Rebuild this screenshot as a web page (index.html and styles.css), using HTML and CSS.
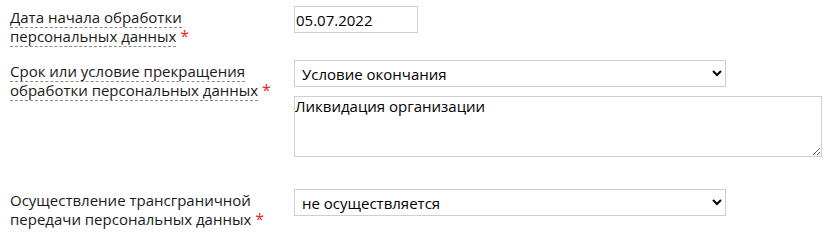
FILE: index.html
```html
<!DOCTYPE html>
<html lang="ru">
<head>
<meta charset="utf-8">
<link rel="stylesheet" href="styles.css">
</head>
<body>
<form class="form">
  <div class="row row-first">
    <div class="label"><span class="hint">Дата начала обработки</span><br><span class="hint">персональных данных</span> <span class="req">*</span></div>
    <div class="field"><input class="input date" type="text" value="05.07.2022"></div>
  </div>
  <div class="row row-second">
    <div class="label"><span class="hint">Срок или условие прекращения</span><br><span class="hint">обработки персональных данных</span> <span class="req">*</span></div>
    <div class="field stack">
      <select class="input select"><option>Условие окончания</option></select>
      <textarea class="input area">Ликвидация организации</textarea>
    </div>
  </div>
  <div class="row row-third">
    <div class="label">Осуществление трансграничной<br>передачи персональных данных <span class="req">*</span></div>
    <div class="field"><select class="input select"><option>не осуществляется</option></select></div>
  </div>
</form>
</body>
</html>
```

FILE: styles.css
```css
html, body {
  margin: 0;
  padding: 0;
  background: #fff;
}
body {
  font-family: "Open Sans", "Noto Sans", sans-serif;
  font-size: 15px;
  color: #1a1a1a;
}
.form {
  padding: 6px 0 0 10px;
}
.row {
  display: grid;
  grid-template-columns: 284px 1fr;
  align-items: start;
}
.row-first { margin-bottom: 14px; }
.row-second { margin-bottom: 32px; }
.label {
  padding-top: 2px;
  line-height: 19px;
}
.hint {
  border-bottom: 1px dashed #8a8a8a;
}
.req {
  color: #e8262b;
  font-size: 16px;
}
.field { display: block; }
.stack {
  display: flex;
  flex-direction: column;
  align-items: flex-start;
  gap: 9px;
}
.input {
  box-sizing: border-box;
  font-family: "Open Sans", "Noto Sans", sans-serif;
  font-size: 15px;
  color: #000;
  background: #fff;
  border: 1px solid #cfcfcf;
  border-radius: 0;
  margin: 0;
  outline: none;
}
.date {
  display: block;
  width: 124px;
  height: 27px;
  padding: 0 0 0 1px;
}
.select {
  display: block;
  width: 432px;
  height: 27px;
  padding: 0 0 0 3px;
}
.area {
  display: block;
  width: 528px;
  height: 61px;
  padding: 0;
  resize: both;
  line-height: 19px;
}
```
